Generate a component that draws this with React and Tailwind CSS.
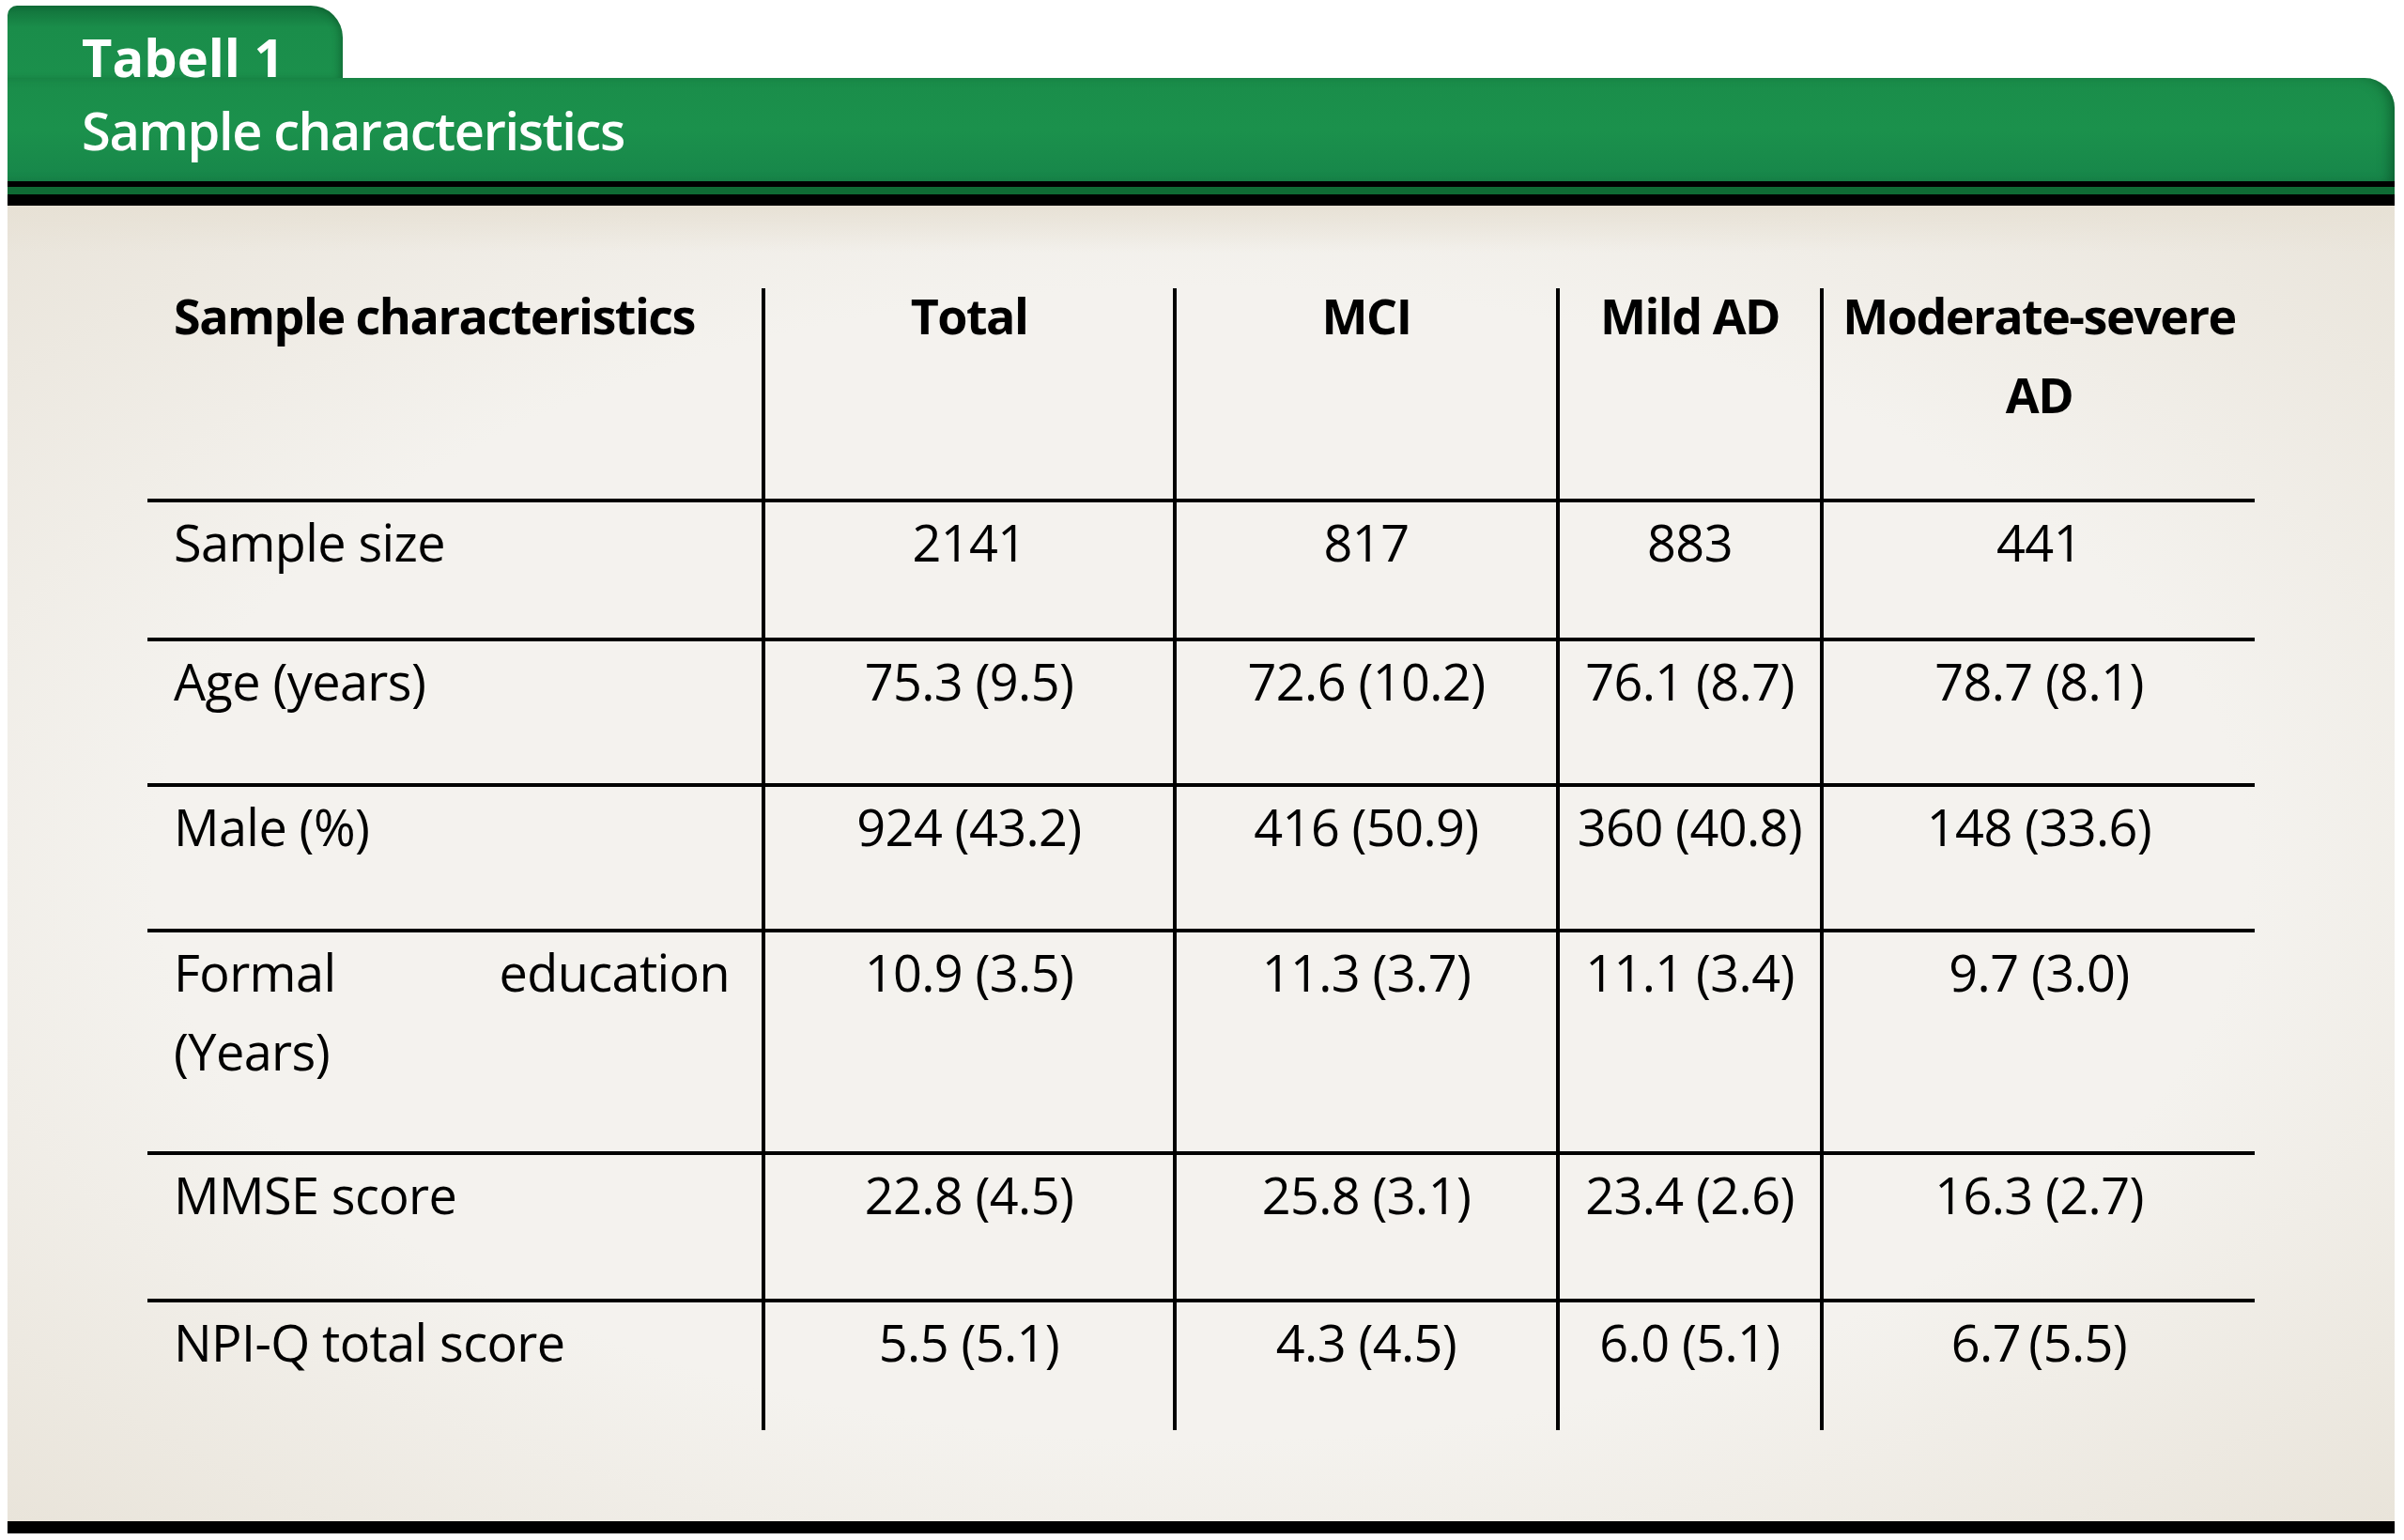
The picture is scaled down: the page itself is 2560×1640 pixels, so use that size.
const columns = ['Total', 'MCI', 'Mild AD']

const rows = [
  { label: 'Sample size', values: ['2141', '817', '883', '441'], pad: 'pb-[60px]' },
  { label: 'Age (years)', values: ['75.3 (9.5)', '72.6 (10.2)', '76.1 (8.7)', '78.7 (8.1)'], pad: 'pb-[67px]' },
  { label: 'Male (%)', values: ['924 (43.2)', '416 (50.9)', '360 (40.8)', '148 (33.6)'], pad: 'pb-[67px]' },
  { label: 'Formal education (Years)', values: ['10.9 (3.5)', '11.3 (3.7)', '11.1 (3.4)', '9.7 (3.0)'], pad: 'pb-[65px]' },
  { label: 'MMSE score', values: ['22.8 (4.5)', '25.8 (3.1)', '23.4 (2.6)', '16.3 (2.7)'], pad: 'pb-[69px]' },
  { label: 'NPI-Q total score', values: ['5.5 (5.1)', '4.3 (4.5)', '6.0 (5.1)', '6.7\u2009(5.5)'], pad: 'pb-[52px]' },
]

const grid = 'grid w-[2244px] grid-cols-[654px_438px_408px_281px_463px]'

export default function App() {
  return (
    <div className="w-[2560px] h-[1640px] bg-white font-['Open_Sans',sans-serif] text-black">
      <div className="ml-[8px] w-[2542px] pt-[6px]">
        {/* Title tab + bar */}
        <div className="w-[357px] h-[77px] rounded-tl-[10px] rounded-tr-[34px] bg-[linear-gradient(to_bottom,#11703a_0%,#1a8d4a_30%,#1b904c_100%)] shadow-[inset_-6px_0_10px_-4px_rgba(0,50,20,0.45)] pl-[79px] pt-[18px]">
          <div className="text-[56px] leading-[72px] font-bold text-white">Tabell 1</div>
        </div>
        <div className="h-[110px] rounded-tr-[32px] bg-[linear-gradient(to_bottom,#1a8d4a_0%,#1b914c_50%,#17864a_100%)] shadow-[inset_-10px_0_14px_-6px_rgba(0,50,20,0.5)] pl-[79px] pt-[19px]">
          <div className="text-[56px] leading-[72px] font-semibold text-white tracking-[-1.4px]">Sample characteristics</div>
        </div>
        <div className="h-[6px] bg-black" />
        <div className="h-[8px] bg-[#0f6b34]" />
        <div className="h-[12px] bg-black" />

        {/* Table panel */}
        <div className="h-[1401px] bg-[linear-gradient(to_bottom,#e7e1d5,rgba(231,225,213,0)_50px),radial-gradient(ellipse_at_center,#f4f2ee_62%,#e9e4da_100%)] pl-[149px] pt-[88px]">
          <div className="text-[54px] leading-[84px] tracking-[-0.6px]">
            {/* header */}
            <div className={`${grid} h-[224px] text-[52px] font-bold tracking-[-1.5px]`}>
              <div className="pl-[28px] pr-[20px]">
                <div className="-mt-[13px]">Sample characteristics</div>
              </div>
              {columns.map(c => (
                <div key={c} className="border-l-[4px] border-black text-center">
                  <div className="-mt-[13px]">{c}</div>
                </div>
              ))}
              <div className="border-l-[4px] border-black text-center">
                <div className="-mt-[13px]">Moderate-severe<br />AD</div>
              </div>
            </div>

            {rows.map(r => (
              <div key={r.label} className={`${grid} border-t-[4px] border-black`}>
                <div className={`pl-[28px] pr-[34px] text-justify ${r.pad}`}>{r.label}</div>
                {r.values.map((v, i) => (
                  <div key={i} className={`border-l-[4px] border-black text-center ${r.pad}`}>{v}</div>
                ))}
              </div>
            ))}
          </div>
        </div>
        <div className="h-[13px] bg-black" />
      </div>
    </div>
  )
}
